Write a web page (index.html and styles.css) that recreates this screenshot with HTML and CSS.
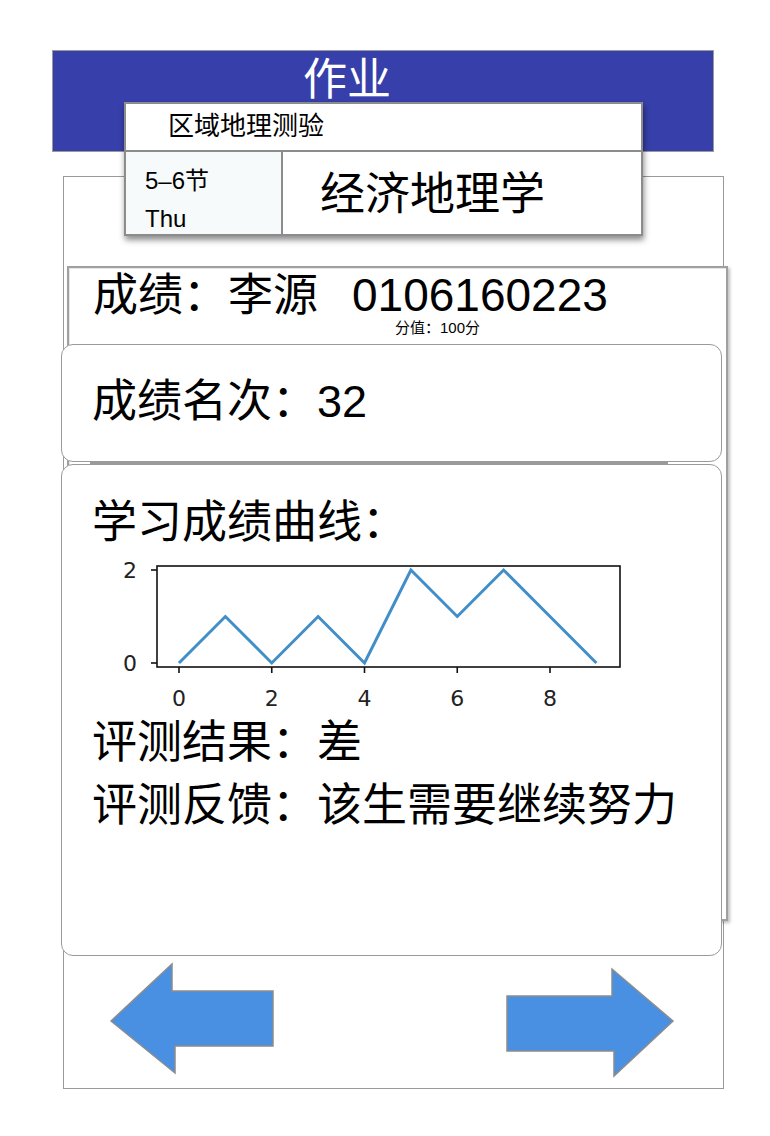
FILE: index.html
```html
<!DOCTYPE html>
<html lang="zh">
<head>
    <meta charset="UTF-8">
    <meta name="viewport" content="width=device-width, initial-scale=1.0">
    <title>作业</title>
    <link rel="stylesheet" href="styles.css">
</head>
<body>
    <div class="page">
        <div class="header">作业</div>

        <div class="lesson-card">
            <div class="lesson-top">区域地理测验</div>
            <div class="lesson-bottom">
                <div class="lesson-slot">
                    <div>5–6节</div>
                    <div>Thu</div>
                </div>
                <div class="lesson-course">经济地理学</div>
            </div>
        </div>

        <div class="frame">
            <div class="score-card">
                <div class="score-title">成绩：李源<span class="student-id">0106160223</span></div>
                <div class="score-sub">分值：100分</div>

                <div class="rank-card">成绩名次：32</div>

                <div class="curve-card">
                    <div class="curve-title">学习成绩曲线：</div>
                    <svg class="chart" width="540" height="160" viewBox="0 0 540 160">
                        <polyline class="chart-line" points="79,112 125.4,65.5 171.75,112 218.1,65.5 264.5,112 310.9,19 357.25,65.5 403.6,19 450,65.5 496.4,112"/>
                        <rect class="chart-axes" x="57" y="15" width="463" height="101"/>
                        <g class="chart-ticks">
                            <line x1="51" y1="19" x2="57" y2="19"/>
                            <line x1="51" y1="112" x2="57" y2="112"/>
                            <line x1="79" y1="116" x2="79" y2="122"/>
                            <line x1="171.75" y1="116" x2="171.75" y2="122"/>
                            <line x1="264.5" y1="116" x2="264.5" y2="122"/>
                            <line x1="357.25" y1="116" x2="357.25" y2="122"/>
                            <line x1="450" y1="116" x2="450" y2="122"/>
                        </g>
                        <g class="chart-labels">
                            <text x="37" y="27" text-anchor="end">2</text>
                            <text x="37" y="120" text-anchor="end">0</text>
                            <text x="79" y="155" text-anchor="middle">0</text>
                            <text x="171.75" y="155" text-anchor="middle">2</text>
                            <text x="264.5" y="155" text-anchor="middle">4</text>
                            <text x="357.25" y="155" text-anchor="middle">6</text>
                            <text x="450" y="155" text-anchor="middle">8</text>
                        </g>
                    </svg>
                    <div class="curve-line">评测结果：差</div>
                    <div class="curve-line">评测反馈：该生需要继续努力</div>
                </div>
            </div>

            <div class="nav">
                <svg class="nav-arrow" width="170" height="120" viewBox="0 0 170 120">
                    <polygon points="3,60 64,3 64,30 165,30 165,85 67,85 67,112"/>
                </svg>
                <svg class="nav-arrow" width="170" height="120" viewBox="0 0 170 120">
                    <polygon points="2,35 107,35 107,8 168,60 109,115 109,90 2,90"/>
                </svg>
            </div>
        </div>
    </div>
</body>
</html>
```

FILE: styles.css
```css
* {
    box-sizing: border-box;
}
body {
    margin: 0;
    background: #fff;
    color: #000;
    font-family: "Liberation Sans", "Noto Sans CJK SC", sans-serif;
}
.page {
    position: relative;
    width: 770px;
    height: 1136px;
    padding-top: 50px;
}
.header {
    margin-left: 52px;
    width: 662px;
    height: 102px;
    padding: 1px 0 0 250px;
    background: #373fab;
    border: 1px solid #9a9a9a;
    color: #fff;
    font-family: "Noto Sans CJK SC", sans-serif;
    font-size: 44px;
    line-height: 48px;
}
.lesson-card {
    position: absolute;
    left: 124px;
    top: 102px;
    width: 519px;
    height: 134px;
    background: #fff;
    border: 2px solid #8c8c8c;
    box-shadow: 1px 4px 6px rgba(0, 0, 0, 0.45);
    z-index: 2;
}
.lesson-top {
    height: 48px;
    padding-left: 42px;
    border-bottom: 2px solid #8c8c8c;
    font-size: 26px;
    line-height: 45px;
}
.lesson-bottom {
    display: flex;
    height: 82px;
}
.lesson-slot {
    width: 157px;
    padding: 10px 0 0 19px;
    background: #f6fafb;
    border-right: 2px solid #8c8c8c;
    font-size: 24px;
    line-height: 38px;
}
.lesson-course {
    padding: 12px 0 0 37px;
    font-family: "Noto Sans CJK SC", sans-serif;
    font-size: 45px;
    line-height: 54px;
}
.frame {
    margin: 24px 0 0 63px;
    width: 661px;
    height: 913px;
    border: 1px solid #9a9a9a;
    padding-top: 89px;
}
.score-card {
    margin-left: 3px;
    width: 661px;
    height: 655px;
    background: #fff;
    border: 2px solid #a0a0a0;
    box-shadow: inset 1px 1px 0 #e6e6e6, 2px 2px 3px rgba(0, 0, 0, 0.25);
}
.score-title {
    height: 52px;
    padding: 4px 0 0 24px;
    font-size: 45px;
    line-height: 48px;
}
.student-id {
    margin-left: 34px;
    font-size: 46px;
    line-height: 1;
}
.score-sub {
    margin-left: 326px;
    font-size: 15px;
    line-height: 16px;
}
.rank-card {
    margin: 8px 0 0 -8px;
    width: 661px;
    height: 118px;
    padding-left: 30px;
    background: #fff;
    border: 1px solid #9a9a9a;
    border-radius: 12px;
    font-size: 45px;
    line-height: 113px;
}
.curve-card {
    position: relative;
    margin: 2px 0 0 -8px;
    width: 661px;
    height: 492px;
    padding: 30px 0 0 30px;
    background: #fff;
    border: 1px solid #9a9a9a;
    border-radius: 12px;
}
.curve-card::before {
    content: "";
    position: absolute;
    top: -3px;
    left: 28px;
    right: 53px;
    height: 3px;
    background: #9a9a9a;
}
.curve-title,
.curve-line {
    font-size: 45px;
    line-height: 56px;
}
.curve-line {
    line-height: 63px;
}
.curve-line:first-of-type {
    margin-top: -3px;
}
.chart {
    display: block;
    margin-left: 8px;
}
.chart-axes {
    fill: none;
    stroke: #111;
    stroke-width: 1.6;
}
.chart-line {
    fill: none;
    stroke: #418ec8;
    stroke-width: 3;
}
.chart-ticks line {
    stroke: #111;
    stroke-width: 1.6;
}
.chart-labels text {
    font-family: "DejaVu Sans", sans-serif;
    font-size: 22px;
    fill: #222;
}
.nav {
    display: flex;
    justify-content: space-between;
    margin-top: 40px;
    padding: 0 48px 0 44px;
}
.nav-arrow {
    display: block;
}
.nav-arrow polygon {
    fill: #4a90e2;
    stroke: #8c8c8c;
    stroke-width: 1.5;
}
```
